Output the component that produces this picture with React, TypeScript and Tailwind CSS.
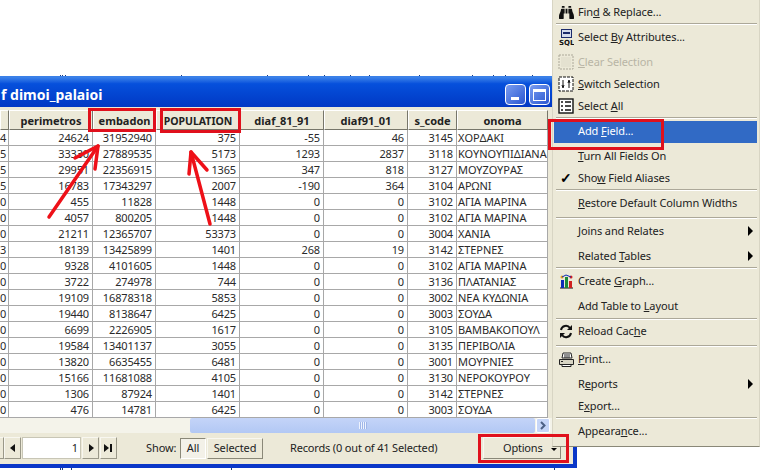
import React from "react";
import { FaBinoculars } from "react-icons/fa";

const font = "[font-family:'DejaVu_Sans',sans-serif]";
const colW = [9, 84, 63, 84, 84, 84, 49, 91];
const headers = ["", "perimetros", "embadon", "POPULATION", "diaf_81_91", "diaf91_01", "s_code", "onoma"];
const topSpecks = [60, 62, 65, 181, 267, 308, 324, 350, 369, 419, 472, 493, 505, 532];
const bottomSpecks = [60, 62, 71, 231, 554];
const rows: string[][] = [
  ["4","24624","31952940","375","-55","46","3145","ΧΟΡΔΑΚΙ"],
  ["5","33330","27889535","5173","1293","2837","3118","ΚΟΥΝΟΥΠΙΔΙΑΝΑ"],
  ["5","29951","22356915","1365","347","818","3127","ΜΟΥΖΟΥΡΑΣ"],
  ["5","16783","17343297","2007","-190","364","3104","ΑΡΩΝΙ"],
  ["0","455","11828","1448","0","0","3102","ΑΓΙΑ ΜΑΡΙΝΑ"],
  ["0","4057","800205","1448","0","0","3102","ΑΓΙΑ ΜΑΡΙΝΑ"],
  ["0","21211","12365707","53373","0","0","3004","ΧΑΝΙΑ"],
  ["3","18139","13425899","1401","268","19","3142","ΣΤΕΡΝΕΣ"],
  ["0","9328","4101605","1448","0","0","3102","ΑΓΙΑ ΜΑΡΙΝΑ"],
  ["0","3722","274978","744","0","0","3136","ΠΛΑΤΑΝΙΑΣ"],
  ["0","19109","16878318","5853","0","0","3002","ΝΕΑ ΚΥΔΩΝΙΑ"],
  ["0","19440","8138647","6425","0","0","3003","ΣΟΥΔΑ"],
  ["0","6699","2226905","1617","0","0","3105","ΒΑΜΒΑΚΟΠΟΥΛ"],
  ["0","19584","13401137","3055","0","0","3135","ΠΕΡΙΒΟΛΙΑ"],
  ["0","13820","6635455","6481","0","0","3001","ΜΟΥΡΝΙΕΣ"],
  ["0","15166","11681088","4105","0","0","3130","ΝΕΡΟΚΟΥΡΟΥ"],
  ["0","1306","87924","1401","0","0","3142","ΣΤΕΡΝΕΣ"],
  ["0","476","14781","6425","0","0","3003","ΣΟΥΔΑ"],
];

function Sep({ y }: { y: number }) {
  return (
    <div className="absolute left-[556px] w-[201px] h-[2px] border-t border-t-[#aca899] border-b border-b-white" style={{ top: y }} />
  );
}

function Item({ y, children, disabled, icon, arrow, hi, check }: { y: number; children: React.ReactNode; disabled?: boolean; icon?: React.ReactNode; arrow?: boolean; hi?: boolean; check?: boolean }) {
  return (
    <div className="absolute left-[554px] w-[205px] h-[22px] flex items-center" style={{ top: y - 12 }}>
      <div className="w-[24px] h-[22px] flex items-center justify-center shrink-0 translate-y-[1px]">{icon}{check && <span className="text-[14px] leading-none font-bold text-black">✓</span>}</div>
      <span className={`text-[11px] tracking-[-0.1px] leading-none whitespace-nowrap ${disabled ? "text-[#b8b5a5]" : hi ? "text-white" : "text-[#222]"}`}>{children}</span>
      {arrow && <div className="ml-auto mr-[6px] w-0 h-0 translate-y-[1px] border-y-[5px] border-y-transparent border-l-[5px] border-l-black" />}
    </div>
  );
}

function PagerBtn({ left, width, children }: { left: number; width: number; children: React.ReactNode }) {
  return (
    <div className="absolute top-[437px] h-[22px] bg-[#ece9d8] border border-[#f8f7f0] border-r-[#9a9888] border-b-[#9a9888] flex items-center justify-center" style={{ left, width }}>
      {children}
    </div>
  );
}

export default function App() {
  return (
    <div className={`relative w-[760px] h-[470px] bg-white overflow-hidden ${font}`}>
      {/* remnants of the window behind */}
      {topSpecks.map((x) => (
        <div key={x} className="absolute top-[75px] w-[1px] h-[2px] bg-[#1a3a80]" style={{ left: x }} />
      ))}
      {bottomSpecks.map((x) => (
        <div key={x} className="absolute top-[468px] w-[1px] h-[2px] bg-[#1a3a80]" style={{ left: x }} />
      ))}

      {/* window frame */}
      <div className="absolute left-0 top-[76px] w-[577px] h-[392px] bg-[#0a37c8]" />
      <div className="absolute left-0 top-[76px] w-[577px] h-[31px] bg-gradient-to-b from-[#3a80e8] from-[5%] via-[#0650dc] via-[25%] to-[#0238c4]" />
      <div className="absolute left-[1px] top-[85px] text-[14px] leading-[20px] font-bold text-white whitespace-nowrap [font-family:'Open_Sans',sans-serif]">f dimoi_palaioi</div>
      <div className="absolute left-[505px] top-[84px] w-[21px] h-[21px] rounded-[4px] border border-white bg-gradient-to-br from-[#7a9cf0] to-[#2a55d0]">
        <div className="absolute left-[5px] bottom-[4px] w-[8px] h-[3px] bg-white" />
      </div>
      <div className="absolute left-[529px] top-[84px] w-[21px] h-[21px] rounded-[4px] border border-white bg-gradient-to-br from-[#7a9cf0] to-[#2a55d0]">
        <div className="absolute left-[3px] top-[4px] w-[13px] h-[12px] border border-white border-t-[3px]" />
      </div>

      {/* body */}
      <div className="absolute left-0 top-[107px] w-[573px] h-[357px] bg-[#ece9d8]" />
      <div className="absolute left-0 top-[110px]">
        <div className="flex h-[20px]">
          {headers.map((h, i) => (
            <div key={i} className={`h-[20px] pt-[3px] flex items-center justify-center bg-[#ece9d8] border-t border-t-white border-l border-l-white border-r border-r-[#77766a] border-b border-b-[#77766a] font-bold text-[#222] whitespace-nowrap overflow-hidden ${h === "POPULATION" ? "text-[10.5px]" : "text-[11px]"}`} style={{ width: colW[i] }}>
              {h}
            </div>
          ))}
        </div>
        {rows.map((r, ri) => (
          <div key={ri} className="flex h-[16px] bg-white">
            {r.map((c, ci) => (
              <div key={ci} className={`h-[16px] border-r border-b border-[#a8a8a8] text-[11px] leading-[16px] text-[#2a2a2a] whitespace-nowrap overflow-hidden ${ci === 7 ? "pl-[1px] text-left tracking-[-0.05px]" : "pr-[3px] text-right tracking-[-0.15px]"}`} style={{ width: colW[ci] }}>
                {ci === 0 ? <span className="block -mr-[1px]">{c}</span> : c}
              </div>
            ))}
          </div>
        ))}
      </div>

      {/* scrollbar */}
      <div className="absolute left-0 top-[418px] w-[552px] h-[15px] bg-[#f4f3ea]" />
      <div className="absolute left-[190px] top-[418px] w-[345px] h-[15px] rounded-[2px] bg-gradient-to-b from-[#c4d4f8] to-[#b2c8f4] flex items-center justify-center">
        <div className="w-[8px] h-[7px] bg-[repeating-linear-gradient(90deg,#eef3fe_0,#eef3fe_1px,#9fb6e8_1px,#9fb6e8_2px)]" />
      </div>
      <div className="absolute left-[536px] top-[418px] w-[14px] h-[15px] rounded-[2px] bg-[#c6d6f8] border border-white flex items-center justify-center">
        <svg width="8" height="9" viewBox="0 0 8 9"><path d="M2 1l3.5 3.5L2 8" fill="none" stroke="#4d6185" strokeWidth="2" /></svg>
      </div>

      {/* toolbar */}
      <PagerBtn left={-14} width={18}><span /></PagerBtn>
      <PagerBtn left={4} width={17}>
        <svg width="6" height="8" viewBox="0 0 6 8"><path d="M5 0v8L0 4z" fill="#111" /></svg>
      </PagerBtn>
      <div className="absolute left-[22px] top-[437px] w-[59px] h-[22px] bg-white border border-[#c8c6b6] text-[11px] leading-[19px] text-right text-[#222] pr-[2px]">1</div>
      <PagerBtn left={82} width={17}>
        <svg width="6" height="8" viewBox="0 0 6 8"><path d="M1 0v8l5-4z" fill="#111" /></svg>
      </PagerBtn>
      <PagerBtn left={100} width={17}>
        <svg width="9" height="8" viewBox="0 0 9 8"><path d="M0 0v8l5-4zM6 0h2v8H6z" fill="#111" /></svg>
      </PagerBtn>
      <div className="absolute left-[146px] top-[440px] text-[11px] tracking-[-0.1px] leading-[15px] text-[#222]">Show:</div>
      <div className="absolute left-[180px] top-[438px] w-[26px] h-[21px] bg-[#f3f1e8] border border-[#8a8878] border-r-white border-b-white text-[11px] leading-[18px] text-center text-[#222]">All</div>
      <div className="absolute left-[207px] top-[438px] w-[56px] h-[21px] bg-[#ece9d8] border border-[#f8f7f0] border-r-[#8a8878] border-b-[#8a8878] text-[11px] tracking-[-0.1px] leading-[18px] text-center text-[#222]">Selected</div>
      <div className="absolute left-[290px] top-[440px] text-[11px] tracking-[-0.17px] leading-[15px] text-[#222] whitespace-nowrap">Records (0 out of 41 Selected)</div>
      <div className="absolute left-[483px] top-[437px] w-[78px] h-[22px] bg-[#ece9d8] border border-[#f8f7f0] border-r-[#8a8878] border-b-[#8a8878] text-[11px] tracking-[-0.2px] leading-[20px] text-[#222] pl-[19px]">Options</div>
      <div className="absolute left-[551px] top-[448px] w-0 h-0 border-x-[3px] border-x-transparent border-t-[3px] border-t-black" />

      {/* menu */}
      <div className="absolute left-[552px] -top-[2px] w-[208px] h-[449px] bg-[#ece9d8] border border-[#d8d5c4] border-b-[#8a8878]" />
      <Item y={12} icon={<FaBinoculars className="w-[15px] h-[15px] text-[#111]" />}>Fin<u>d</u> &amp; Replace...</Item>
      <Sep y={23} />
      <Item y={37} icon={
        <svg width="15" height="17" viewBox="0 0 15 17">
          <rect x="2.5" y="0.5" width="10" height="8" fill="#d5dbea" stroke="#1b2a6b" />
          <rect x="4" y="3" width="7" height="2" fill="#1b2a6b" />
          <text x="0" y="16" fontSize="7" fontWeight="bold" fill="#111" fontFamily="DejaVu Sans">SQL</text>
        </svg>
      }>Select <u>B</u>y Attributes...</Item>
      <Item y={62} disabled icon={
        <svg width="16" height="16" viewBox="0 0 16 16"><rect x="1" y="1" width="14" height="14" fill="none" stroke="#aca899" strokeDasharray="2 1" /><rect x="3" y="3" width="10" height="10" fill="#e4e1d0" /></svg>
      }><u>C</u>lear Selection</Item>
      <Item y={84} icon={
        <svg width="16" height="16" viewBox="0 0 16 16"><rect x="1" y="1" width="14" height="14" fill="#fff" stroke="#111" strokeDasharray="3 1" /><path d="M5 4v7M4 9l1 3 1-3M11 12V5M10 7l1-3 1 3" fill="none" stroke="#111" /></svg>
      }><u>S</u>witch Selection</Item>
      <Item y={106} icon={
        <svg width="16" height="16" viewBox="0 0 16 16"><rect x="1" y="1" width="14" height="14" fill="#fff" stroke="#111" strokeWidth="1.4" /><path d="M3 4h2M7 4h6M3 8h2M7 8h6M3 12h2M7 12h6" stroke="#111" strokeWidth="1.6" /></svg>
      }>Select <u>A</u>ll</Item>
      <Sep y={117} />
      <div className="absolute left-[554px] top-[121px] w-[203px] h-[22px] bg-[#316ac5]" />
      <Item y={131} hi>Add <u>F</u>ield...</Item>
      <Item y={156}><u>T</u>urn All Fields On</Item>
      <Item y={178} check>Sho<u>w</u> Field Aliases</Item>
      <Sep y={189} />
      <Item y={203}><u>R</u>estore Default Column Widths</Item>
      <Sep y={217} />
      <Item y={231} arrow><u>J</u>oins and Relates</Item>
      <Item y={256} arrow>Related <u>T</u>ables</Item>
      <Sep y={267} />
      <Item y={281} icon={
        <svg width="15" height="15" viewBox="0 0 15 15"><path d="M1 14h13" stroke="#111" /><path d="M2 6h3v8H2z" fill="#0b2bb8" /><path d="M6 3h3v11H6z" fill="#1a8a3a" /><path d="M10 7h3v7h-3z" fill="#d02020" /><circle cx="3" cy="3" r="1.5" fill="#e0a020" /><circle cx="12" cy="3" r="1.5" fill="#d02020" /><path d="M3 3l4-2 5 2" stroke="#0b2bb8" fill="none" /></svg>
      }>Create <u>G</u>raph...</Item>
      <Item y={306}>Add Table to <u>L</u>ayout</Item>
      <Sep y={318} />
      <Item y={331} icon={
        <svg width="14" height="15" viewBox="0 0 14 15"><path d="M2 6a5 5 0 0 1 9-2" fill="none" stroke="#111" strokeWidth="2" /><path d="M13 1v5H8z" fill="#111" /><path d="M12 9a5 5 0 0 1-9 2" fill="none" stroke="#111" strokeWidth="2" /><path d="M1 14V9h5z" fill="#111" /></svg>
      }>Reload Cac<u>h</u>e</Item>
      <Sep y={345} />
      <Item y={359} icon={
        <svg width="17" height="15" viewBox="0 0 17 15"><path d="M5 1h8l1 5H4z" fill="#fff" stroke="#222" /><path d="M6 3h6M6 5h6" stroke="#222" /><path d="M1.5 7.5h14v5h-14z" fill="#d8d5c4" stroke="#222" /><path d="M4 12.5h9v2H4z" fill="#fff" stroke="#222" /><path d="M3 9.5h2" stroke="#222" /></svg>
      }><u>P</u>rint...</Item>
      <Item y={384} arrow>R<u>e</u>ports</Item>
      <Item y={406}>E<u>x</u>port...</Item>
      <Sep y={417} />
      <Item y={431}>Appeara<u>n</u>ce...</Item>

      {/* annotation boxes */}
      <div className="absolute left-[88px] top-[108px] w-[68px] h-[24px] border-[3px] border-[#e0101c]" />
      <div className="absolute left-[160px] top-[108px] w-[81px] h-[25px] border-[3px] border-[#e0101c]" />
      <div className="absolute left-[548px] top-[119px] w-[116px] h-[31px] border-[3px] border-[#e0101c]" />
      <div className="absolute left-[478px] top-[434px] w-[91px] h-[29px] border-[3px] border-[#e0101c]" />

      {/* annotation arrows */}
      <svg className="absolute left-0 top-0" width="760" height="470" viewBox="0 0 760 470">
        <g fill="none" stroke="#ee1018" strokeWidth="3.5" strokeLinecap="round" strokeLinejoin="round">
          <path d="M49 217L98 146" />
          <path d="M75 158L98 146L95 169" />
          <path d="M210 224L191 152" />
          <path d="M189 174L191 152L207 170" />
        </g>
      </svg>
    </div>
  );
}
